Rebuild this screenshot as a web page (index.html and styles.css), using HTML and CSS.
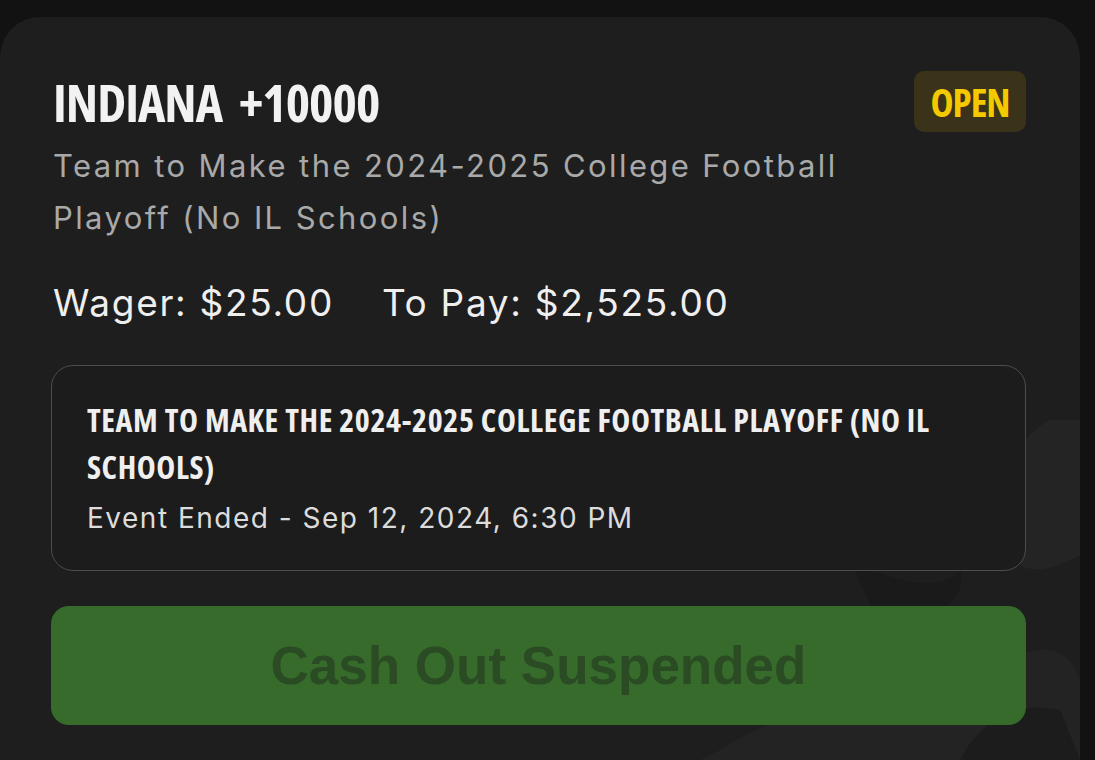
FILE: index.html
```html
<!DOCTYPE html>
<html lang="en">
<head>
    <meta charset="UTF-8">
    <meta name="viewport" content="width=device-width, initial-scale=1.0">
    <title>Bet Slip</title>
    <link rel="stylesheet" href="styles.css">
</head>
<body>
    <div class="card">
        <!-- faint logo watermark behind the card content -->
        <svg class="watermark" width="420" height="380" viewBox="0 0 420 380">
            <path d="M390 40 C350 60 330 120 345 170 C360 200 395 190 420 175 L420 40 Z" fill="#242424"/>
            <path d="M190 180 C230 200 280 215 300 190 C310 230 250 250 215 235 Z" fill="#1a1a1a"/>
            <path d="M60 370 C140 320 260 290 380 270 C400 268 415 280 420 300 L420 380 L40 380 Z" fill="#232323"/>
            <path d="M300 380 C320 340 360 320 400 330 L420 380 Z" fill="#1c1c1c"/>
        </svg>

        <div class="header">
            <h1 class="cond title">INDIANA&nbsp;&nbsp;+10000</h1>
            <span class="cond badge">OPEN</span>
        </div>
        <p class="market">Team to Make the 2024-2025 College Football Playoff (No IL Schools)</p>
        <div class="amounts">
            <span>Wager: $25.00</span>
            <span>To Pay: $2,525.00</span>
        </div>

        <div class="event">
            <div class="cond event-name">TEAM TO MAKE THE 2024-2025 COLLEGE FOOTBALL PLAYOFF (NO IL SCHOOLS)</div>
            <div class="event-date">Event Ended - Sep 12, 2024, 6:30 PM</div>
        </div>

        <button class="cashout" disabled>Cash Out Suspended</button>
    </div>
</body>
</html>
```

FILE: styles.css
```css
body {
    margin: 0;
    padding: 0;
    background: #121212;
    font-family: Inter, "Noto Sans", sans-serif;
    overflow: hidden;
}
.card {
    position: relative;
    width: 1080px;
    height: 743px;
    margin-top: 17px;
    box-sizing: border-box;
    padding: 54px 54px 0 51px;
    background: #1e1e1e;
    border-radius: 40px 40px 0 0;
    overflow: hidden;
}
.watermark {
    position: absolute;
    right: 0;
    bottom: 0;
}
.header, .market, .amounts, .event, .cashout {
    position: relative;
}
.cond {
    font-family: "Open Sans", sans-serif;
    font-stretch: 75%;
    font-weight: 700;
}
.header {
    display: flex;
    justify-content: space-between;
    align-items: center;
}
.title {
    margin: 0 0 0 2px;
    font-size: 52px;
    letter-spacing: -1px;
    color: #f2f2f2;
    line-height: 61px;
}
.badge {
    width: 112px;
    height: 61px;
    line-height: 61px;
    text-align: center;
    font-size: 39px;
    letter-spacing: -1px;
    color: #f5c900;
    background: #3a3219;
    border-radius: 10px;
}
.market {
    margin: 8px 0 0 2px;
    width: 840px;
    font-size: 31px;
    letter-spacing: 2.4px;
    line-height: 52px;
    color: #a9a9a9;
}
.amounts {
    display: flex;
    gap: 48px;
    margin: 37px 0 0 2px;
    font-size: 37px;
    letter-spacing: 1.7px;
    line-height: 44px;
    color: #efefef;
}
.event {
    margin-top: 40px;
    height: 206px;
    box-sizing: border-box;
    padding: 30px 35px 0;
    background: #1c1c1c;
    border: 1px solid #4d4d4d;
    border-radius: 22px;
}
.event-name {
    font-size: 32px;
    letter-spacing: 0.6px;
    line-height: 47px;
    color: #efefef;
}
.event-date {
    margin-top: 8px;
    font-size: 28px;
    letter-spacing: 1.5px;
    line-height: 40px;
    color: #dcdcdc;
}
.cashout {
    display: block;
    width: 100%;
    height: 119px;
    margin-top: 35px;
    border: none;
    border-radius: 18px;
    background: rgba(56, 112, 44, 0.95);
    color: #2a4b23;
    font-family: "Liberation Sans", Arial, sans-serif;
    font-weight: 700;
    font-size: 53px;
}
```
